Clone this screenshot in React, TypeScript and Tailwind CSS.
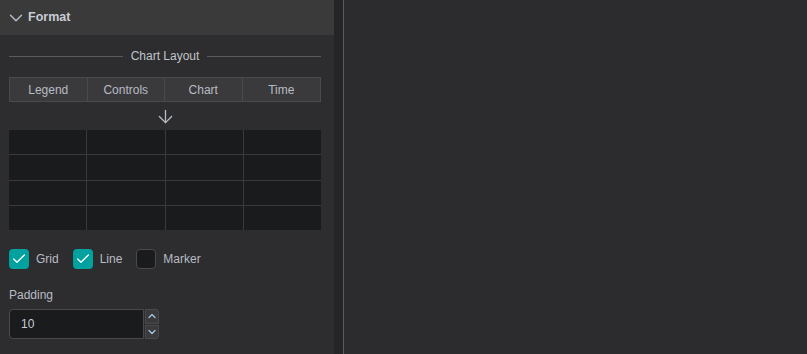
import React from 'react';
import { ChevronDown, ChevronUp, ArrowDown, Check } from 'lucide-react';

const tabs = ['Legend', 'Controls', 'Chart', 'Time'];

function CheckBox({ label, checked }: { label: string; checked: boolean }) {
  return (
    <label className="flex items-center gap-[7px]">
      <span
        className={
          checked
            ? 'flex h-[20px] w-[20px] items-center justify-center rounded-[4px] bg-[#00a19f]'
            : 'flex h-[20px] w-[20px] items-center justify-center rounded-[4px] border border-[#4a4a4c] bg-[#1a1b1d]'
        }
      >
        {checked && <Check className="h-[16px] w-[16px] text-white" strokeWidth={2} />}
      </span>
      <span className="text-[12px] text-[#b8bcc4]">{label}</span>
    </label>
  );
}

export default function App() {
  return (
    <div
      className="flex h-[354px] w-[807px] overflow-hidden bg-[#2c2c2e]"
      style={{ fontFamily: '"Liberation Sans", Arial, sans-serif' }}
    >
      {/* Left format panel */}
      <div className="flex w-[334px] shrink-0 flex-col bg-[#2d2d2f]">
        <div className="flex h-[35px] items-center gap-[1px] bg-[#3a3a3b] pl-[5px]">
          <ChevronDown className="h-[22px] w-[22px] text-[#b8bcc4]" strokeWidth={1.6} />
          <span className="text-[12.5px] font-bold text-[#c8ccd2]">Format</span>
        </div>

        <div className="flex flex-col px-[9px] pt-[12px]">
          {/* Divider title */}
          <div className="flex w-[312px] items-center gap-[8px]">
            <div className="h-px flex-1 bg-[#5a5a5c]" />
            <span className="text-[12px] text-[#c0c4ca]">Chart Layout</span>
            <div className="h-px flex-1 bg-[#5a5a5c]" />
          </div>

          {/* Tabs row */}
          <div className="mt-[12px] grid h-[25px] w-[312px] grid-cols-4 border border-[#4a4a4c] bg-[#3a3a3c]">
            {tabs.map((t, i) => (
              <div
                key={t}
                className={
                  'flex items-center justify-center text-[12px] text-[#b8bcc4] ' +
                  (i < 3 ? 'border-r border-[#4a4a4c]' : '')
                }
              >
                {t}
              </div>
            ))}
          </div>

          <div className="flex h-[28px] w-[312px] items-center justify-center">
            <ArrowDown className="h-[21px] w-[21px] text-[#b8bcc4]" strokeWidth={1.5} />
          </div>

          {/* Layout grid */}
          <div className="grid h-[100px] w-[312px] grid-cols-4 grid-rows-4 gap-px bg-[#3a3a3c]">
            {Array.from({ length: 16 }).map((_, i) => (
              <div key={i} className="bg-[#1a1b1d]" />
            ))}
          </div>

          {/* Checkboxes */}
          <div className="mt-[19px] flex items-center gap-[14px]">
            <CheckBox label="Grid" checked />
            <CheckBox label="Line" checked />
            <CheckBox label="Marker" checked={false} />
          </div>

          {/* Padding */}
          <div className="mt-[17px] text-[12px] text-[#b8bcc4]">Padding</div>
          <div className="mt-[5px] flex h-[30px] w-[150px] gap-px">
            <div className="flex flex-1 items-center rounded-l-[4px] border border-[#4a4a4c] bg-[#1a1b1d] pl-[11px] text-[12px] text-[#c8ccd2]">
              10
            </div>
            <div className="flex w-[14px] flex-col gap-px">
              <div className="flex flex-1 items-center justify-center rounded-tr-[3px] border border-[#4a4a4c] bg-[#3a3a3c]">
                <ChevronUp className="h-[12px] w-[12px] text-[#a8c4e0]" strokeWidth={2.5} />
              </div>
              <div className="flex flex-1 items-center justify-center rounded-br-[3px] border border-[#4a4a4c] bg-[#3a3a3c]">
                <ChevronDown className="h-[12px] w-[12px] text-[#a8c4e0]" strokeWidth={2.5} />
              </div>
            </div>
          </div>
        </div>
      </div>

      {/* Scroll gutter and divider */}
      <div className="w-[9px] shrink-0 bg-[#252527]" />
      <div className="w-px shrink-0 bg-[#5a5a5c]" />

      {/* Right empty area */}
      <div className="flex-1 bg-[#2c2c2e]" />
    </div>
  );
}
